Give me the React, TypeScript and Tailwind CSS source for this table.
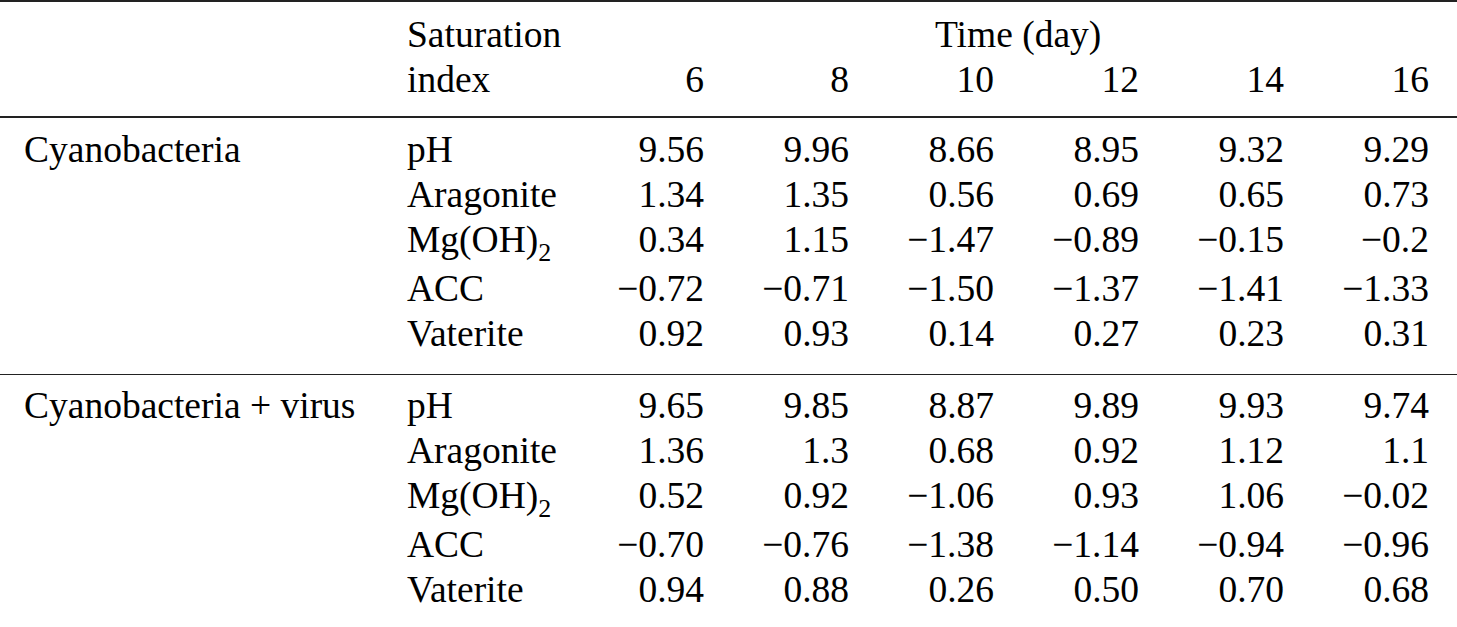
const days = ['6', '8', '10', '12', '14', '16'];

type Row = { label: React.ReactNode; values: string[] };

const Mg = (
  <span>
    Mg(OH)<span className="relative top-[9px] text-[26px]">2</span>
  </span>
);

const groups: { name: string; rows: Row[] }[] = [
  {
    name: 'Cyanobacteria',
    rows: [
      { label: 'pH', values: ['9.56', '9.96', '8.66', '8.95', '9.32', '9.29'] },
      { label: 'Aragonite', values: ['1.34', '1.35', '0.56', '0.69', '0.65', '0.73'] },
      { label: Mg, values: ['0.34', '1.15', '−1.47', '−0.89', '−0.15', '−0.2'] },
      { label: 'ACC', values: ['−0.72', '−0.71', '−1.50', '−1.37', '−1.41', '−1.33'] },
      { label: 'Vaterite', values: ['0.92', '0.93', '0.14', '0.27', '0.23', '0.31'] },
    ],
  },
  {
    name: 'Cyanobacteria + virus',
    rows: [
      { label: 'pH', values: ['9.65', '9.85', '8.87', '9.89', '9.93', '9.74'] },
      { label: 'Aragonite', values: ['1.36', '1.3', '0.68', '0.92', '1.12', '1.1'] },
      { label: Mg, values: ['0.52', '0.92', '−1.06', '0.93', '1.06', '−0.02'] },
      { label: 'ACC', values: ['−0.70', '−0.76', '−1.38', '−1.14', '−0.94', '−0.96'] },
      { label: 'Vaterite', values: ['0.94', '0.88', '0.26', '0.50', '0.70', '0.68'] },
    ],
  },
];

// column grid: group name | index | six days
const grid = 'grid grid-cols-[407px_152px_repeat(6,145px)]';

export default function App() {
  return (
    <div className="w-[1457px] h-[627px] bg-white text-black font-['Liberation_Serif','Times_New_Roman',serif] text-[37.5px] leading-[45px]">
      <div className="h-[2px] bg-[#222]" />

      {/* header */}
      <div className="pt-[10px] pb-[14px]">
        <div className={grid}>
          <div />
          <div>Saturation</div>
          <div className="col-span-6 pl-[376px]">Time (day)</div>
        </div>
        <div className={grid}>
          <div />
          <div>index</div>
          {days.map((d) => (
            <div key={d} className="text-right">
              {d}
            </div>
          ))}
        </div>
      </div>
      <div className="h-[2px] bg-[#222]" />

      {groups.map((g, gi) => (
        <div key={g.name}>
          <div className={gi === 0 ? 'pt-[9px] pb-[18px]' : 'pt-[8px] pb-[20px]'}>
            {g.rows.map((r, ri) => (
              <div key={ri} className={grid}>
                <div className="pl-[24px] whitespace-nowrap">{ri === 0 ? g.name : ''}</div>
                <div className="whitespace-nowrap">{r.label}</div>
                {r.values.map((v, vi) => (
                  <div key={vi} className="text-right">
                    {v}
                  </div>
                ))}
              </div>
            ))}
          </div>
          <div className={gi === 0 ? 'h-px bg-[#222]' : 'h-[2px] bg-[#222]'} />
        </div>
      ))}
    </div>
  );
}
